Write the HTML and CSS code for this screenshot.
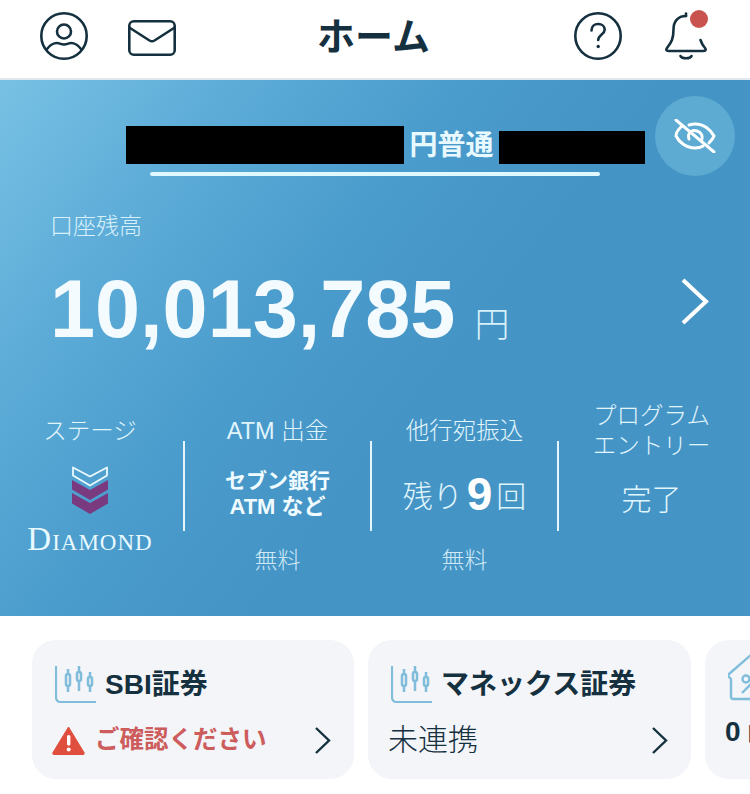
FILE: index.html
```html
<!DOCTYPE html>
<html lang="ja">
  <head>
    <meta charset="utf-8">
    <title>ホーム</title>
    <link rel="stylesheet" href="styles.css">
  </head>
  <body>
    <header class="topbar">
      <div class="topbar-group">
        <svg class="icon-48" viewBox="0 0 48 48" fill="none" stroke="#15303f" stroke-width="2.6">
          <circle cx="24" cy="24" r="22.7"/>
          <circle cx="24" cy="19.5" r="7"/>
          <path d="M7 37c3-4 6-6 10-6 2.500 0 3.500 1.500 7 1.500s4.500-1.500 7-1.500c4 0 7 2 10 6" stroke-linecap="round"/>
        </svg>
        <svg class="icon-48" viewBox="0 0 48 48" fill="none" stroke="#15303f" stroke-width="2.6" stroke-linejoin="round">
          <rect x="1.300" y="7.300" width="45.400" height="33.400" rx="4.500" transform="translate(0 2)"/>
          <path d="M2 16l19.500 12.500c1.700 1 3.300 1 5 0L46 16" stroke-linecap="round"/>
        </svg>
      </div>
      <h1 class="topbar-title">ホーム</h1>
      <div class="topbar-group topbar-group-right">
        <svg class="icon-48" viewBox="0 0 48 48" fill="none" stroke="#15303f" stroke-width="2.6">
          <circle cx="24" cy="24" r="22.700"/>
          <path d="M17.500 18.500c0-4 3-6.500 6.700-6.500 3.800 0 6.500 2.500 6.500 5.700 0 4.500-6.500 5-6.500 10.300" stroke-linecap="round"/>
          <circle cx="24.200" cy="34.500" r="1.700" fill="#15303f" stroke="none"/>
        </svg>
        <div class="bell">
          <svg class="icon-48" viewBox="0 0 48 48" fill="none" stroke="#15303f" stroke-width="2.6" stroke-linejoin="round" stroke-linecap="round">
            <path d="M24 4c-8.500 0-12.500 6-12.500 13.500 0 9-2 13-6.500 18.500-1.200 1.500-1 3 1.500 3h35c2.500 0 2.700-1.500 1.500-3-2.200-2.500-3.500-5-4.500-8"/>
            <path d="M24 1.500V4"/>
            <path d="M18.500 44c1 3 10 3 11 0"/>
          </svg>
          <span class="bell-badge"></span>
        </div>
      </div>
    </header>

    <section class="hero">
      <button class="eye-btn">
        <svg width="42" height="34" viewBox="0 0 42 34" fill="none" stroke="#fff" stroke-width="3" stroke-linecap="round">
          <path d="M8 7C3.500 11 2 14 2 17c3 6 10 12 19 12 3 0 6-.6 8-2"/>
          <path d="M15 6c2-.6 4-1 6-1 9 0 16 6 19 12-1 3-3 5-5 7"/>
          <path d="M15 20c-2-6 3-10 8-8 4 1 6 5 5 8"/>
          <path d="M2 1l38 32"/>
        </svg>
      </button>

      <div class="account">
        <span class="redact redact-name"></span>
        <span class="account-type">円普通</span>
        <span class="redact redact-number"></span>
      </div>
      <div class="account-line"></div>

      <div class="balance-label">口座残高</div>
      <div class="balance">
        <div class="balance-amount">10,013,785<span class="balance-unit">円</span></div>
        <svg class="balance-arrow" width="28" height="47" viewBox="0 0 28 47" fill="none" stroke="#fff" stroke-width="4">
          <path d="M2 2l23 21.500L2 45"/>
        </svg>
      </div>

      <div class="stats">
        <div class="stat">
          <div class="stat-title">ステージ</div>
          <div class="stage">
            <svg width="36" height="48" viewBox="0 0 36 48">
              <path d="M1 1.500l17 9 17-9v8l-17 10-17-10z" fill="none" stroke="#eaf9ff" stroke-width="1.800" stroke-linejoin="round"/>
              <path d="M0 14l18 10 18-10v9.500L18 34 0 23.500z" fill="#7a3a80"/>
              <path d="M0 27l18 10 18-10v10.500L18 48 0 37.500z" fill="#7a3a80"/>
            </svg>
            <div class="stage-name">Diamond</div>
          </div>
        </div>
        <div class="stat">
          <div class="stat-title">ATM 出金</div>
          <div class="stat-value stat-value-small">セブン銀行<br><span class="stat-atm">ATM など</span></div>
          <div class="stat-note">無料</div>
        </div>
        <div class="stat">
          <div class="stat-title">他行宛振込</div>
          <div class="stat-value">残り<b class="stat-count">9</b>回</div>
          <div class="stat-note">無料</div>
        </div>
        <div class="stat">
          <div class="stat-title">プログラム<br>エントリー</div>
          <div class="stat-value stat-value-done">完了</div>
        </div>
      </div>
    </section>

    <section class="cards">
      <div class="card">
        <div class="card-head">
          <svg class="chart" width="42" height="37" viewBox="0 0 42 37" fill="none" stroke="#7fbddb" stroke-width="2.500">
            <path d="M1 0v31c0 3 2 5 5 5h35" stroke-width="2.200"/>
            <rect x="11" y="8" width="4" height="12" rx="2"/><path d="M13 3v5M13 20v6"/>
            <rect x="22" y="6" width="4" height="9" rx="2"/><path d="M24 0v6M24 15v10"/>
            <rect x="33" y="11" width="4" height="9" rx="2"/><path d="M35 6v5M35 20v6"/>
          </svg>
          <div class="card-title">SBI証券</div>
        </div>
        <div class="card-foot">
          <svg width="33" height="29" viewBox="0 0 33 29">
            <path d="M16.500 1L32 26.500c.6 1.200 0 2.500-1.500 2.500h-28C1 29 .4 27.700 1 26.500z" fill="#e04f3e" stroke="#e04f3e" stroke-linejoin="round"/>
            <rect x="15" y="9" width="3.400" height="10.500" rx="1.500" fill="#fff"/>
            <circle cx="16.700" cy="23.500" r="2" fill="#fff"/>
          </svg>
          <div class="card-alert">ご確認ください</div>
          <svg class="card-arrow" width="16" height="27" viewBox="0 0 16 27" fill="none" stroke="#15303f" stroke-width="2.400"><path d="M1 1l13 12.500L1 26"/></svg>
        </div>
      </div>
      <div class="card">
        <div class="card-head">
          <svg class="chart" width="42" height="37" viewBox="0 0 42 37" fill="none" stroke="#7fbddb" stroke-width="2.500">
            <path d="M1 0v31c0 3 2 5 5 5h35" stroke-width="2.200"/>
            <rect x="11" y="8" width="4" height="12" rx="2"/><path d="M13 3v5M13 20v6"/>
            <rect x="22" y="6" width="4" height="9" rx="2"/><path d="M24 0v6M24 15v10"/>
            <rect x="33" y="11" width="4" height="9" rx="2"/><path d="M35 6v5M35 20v6"/>
          </svg>
          <div class="card-title">マネックス証券</div>
        </div>
        <div class="card-foot">
          <div class="card-status">未連携</div>
          <svg class="card-arrow" width="16" height="27" viewBox="0 0 16 27" fill="none" stroke="#15303f" stroke-width="2.400"><path d="M1 1l13 12.500L1 26"/></svg>
        </div>
      </div>
      <div class="card card-cut">
        <div class="card-head">
          <svg class="house" width="42" height="48" viewBox="0 0 42 48" fill="none" stroke="#7fbddb" stroke-width="2.400" stroke-linejoin="round">
            <path d="M4 46h36M5 46c-1 0-2-1-2-2V26L1 24c-1-1-1-2 0-3L24 1l18 16"/>
            <circle cx="18" cy="26" r="3.500"/>
            <path d="M14 40l14-14"/>
          </svg>
        </div>
        <div class="card-foot">
          <div class="card-amount">0<span class="card-amount-unit">円</span></div>
        </div>
      </div>
    </section>
  </body>
</html>
```

FILE: styles.css
```css
/* Base */
* { box-sizing: border-box; }
html, body { height: 794px; }
body {
  margin: 0;
  overflow: hidden;
  background: #fff;
  color: #15303f;
  font-family: "Liberation Sans", "Noto Sans CJK JP", sans-serif;
}

/* Top bar */
.topbar {
  display: grid;
  grid-template-columns: 1fr auto 1fr;
  align-items: center;
  height: 80px;
  padding: 0 40px 6px;
  border-bottom: 2px solid #dfe8ee;
}
.topbar-group { display: flex; gap: 40px; align-items: center; }
.topbar-group-right { justify-content: flex-end; }
.topbar-title { margin: 1px 3px 0 0; font-size: 38px; line-height: 44px; font-weight: 700; }
.icon-48 { display: block; width: 48px; height: 48px; }
.bell { position: relative; }
.bell-badge {
  position: absolute;
  top: -2px;
  right: 2px;
  width: 18px;
  height: 18px;
  border-radius: 50%;
  background: #c9544f;
}

/* Hero */
.hero {
  position: relative;
  height: 536px;
  padding-top: 46px;
  color: #fff;
  background: linear-gradient(128deg, #78c1e4 0%, #5dacd8 20%, #4a9ccc 40%, #4494c6 58%);
}
.eye-btn {
  position: absolute;
  top: 16px;
  left: 655px;
  display: flex;
  align-items: center;
  justify-content: center;
  width: 80px;
  height: 80px;
  padding: 0;
  border: 0;
  border-radius: 50%;
  background: #5dabd2;
}
.account { display: flex; align-items: flex-end; padding-left: 126px; }
.redact { display: block; background: #000; }
.redact-name { width: 278px; height: 38px; }
.redact-number { width: 146px; height: 33px; }
.account-type {
  width: 95px;
  text-align: center;
  font-size: 28px;
  line-height: 36px;
  font-weight: 700;
  color: #e8f9ff;
}
.account-line {
  width: 450px;
  height: 4px;
  margin: 8px 0 0 150px;
  border-radius: 2px;
  background: #e0f8ff;
}
.balance-label {
  margin-top: 35px;
  padding-left: 50px;
  font-size: 23px;
  line-height: 30px;
  font-weight: 300;
  color: #d8f0fa;
}
.balance {
  display: flex;
  align-items: flex-start;
  justify-content: space-between;
  height: 80px;
  margin-top: 21px;
  padding: 0 41px 0 50px;
}
.balance-amount {
  margin-top: 7px;
  font-size: 81px;
  line-height: 80px;
  font-weight: 700;
  color: #f4fbfe;
  white-space: nowrap;
}
.balance-unit {
  margin-left: 19px;
  font-size: 35px;
  font-weight: 300;
  color: #d8f0fa;
}
.balance-arrow { margin-top: 16px; }

/* Stats under the balance */
.stats {
  display: grid;
  grid-template-columns: 184px 187px 187px 187px;
  margin-top: 59px;
  text-align: center;
  color: #e0f5fc;
}
.stat { position: relative; height: 190px; }
.stat:first-child { padding-right: 4px; }
.stat:not(:last-child)::after {
  content: "";
  position: absolute;
  top: 40px;
  right: -1px;
  width: 2px;
  height: 90px;
  background: #e4f6fc;
}
.stat-title {
  display: flex;
  align-items: center;
  justify-content: center;
  height: 60px;
  font-size: 23.500px;
  line-height: 30px;
  font-weight: 300;
}
.stat-value {
  display: flex;
  align-items: center;
  justify-content: center;
  height: 66px;
  font-size: 30px;
  font-weight: 300;
}
.stat-value-small {
  display: block;
  padding-top: 7px;
  font-size: 21px;
  line-height: 26px;
  font-weight: 700;
  color: #f0fbff;
}
.stat-atm { font-size: 22px; }
.stat-value-done { margin-top: 3px; }
.stat-count { margin: 0 4px; font-size: 46px; line-height: 40px; font-weight: 700; color: #fff; }
.stat-note {
  margin-top: 18px;
  font-size: 23px;
  line-height: 30px;
  font-weight: 300;
  color: #cfe9f5;
}
.stage { padding-top: 5px; }
.stage svg { display: block; margin: 0 auto; }
.stage-name {
  margin-top: 7px;
  font-family: "Liberation Serif", serif;
  font-variant: small-caps;
  font-size: 33px;
  line-height: 36px;
  letter-spacing: 1px;
  color: #e8f9ff;
}

/* Cards */
.cards { display: flex; gap: 14px; padding: 24px 0 0 32px; }
.card {
  flex: none;
  width: 323px;
  height: 139px;
  padding: 26px 23px 0 20px;
  border-radius: 24px;
  background: #f3f5f8;
}
.card:first-child { width: 322px; }
.card-cut { padding-top: 18px; }
.card-head { display: flex; align-items: center; gap: 8px; height: 37px; padding-left: 3px; }
.chart { flex: none; }
.house { flex: none; }
.card-title { font-size: 28px; line-height: 36px; font-weight: 700; white-space: nowrap; }
.card-foot {
  display: flex;
  align-items: center;
  gap: 10px;
  height: 40px;
  margin-top: 17px;
}
.card-alert { font-size: 24.500px; line-height: 36px; font-weight: 700; color: #cd5c5c; white-space: nowrap; }
.card-status { font-size: 30px; line-height: 40px; font-weight: 300; }
.card-arrow { margin-left: auto; }
.card-amount { font-size: 28px; font-weight: 700; white-space: nowrap; }
.card-amount-unit { margin-left: 7px; font-size: 20px; font-weight: 400; }
```
